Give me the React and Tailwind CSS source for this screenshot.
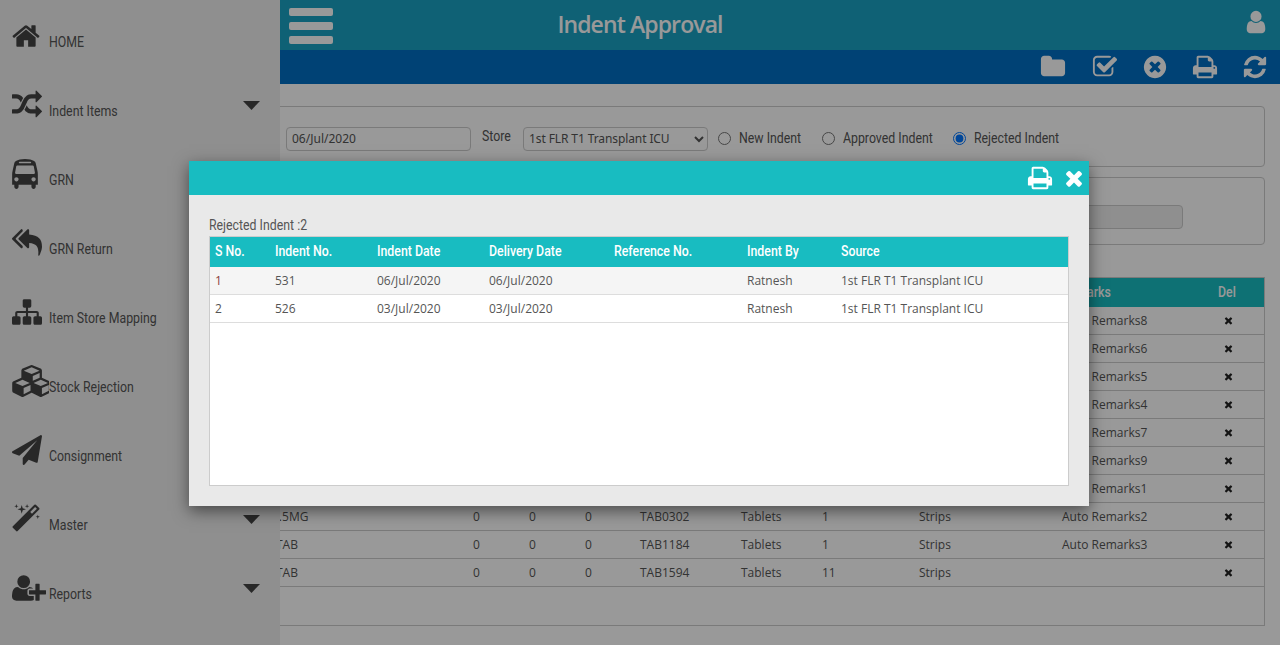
const P = {
  home: "M1472 992v480q0 26-19 45t-45 19h-384v-384h-256v384h-384q-26 0-45-19t-19-45v-480q0-1 .5-3t.5-3l575-474 575 474q1 2 1 6zm223-69l-62 74q-8 9-21 11h-3q-13 0-21-7l-692-577-692 577q-12 8-24 7-13-2-21-11l-62-74q-8-10-7-23.5t11-21.5l719-599q32-26 76-26t76 26l244 204v-195q0-14 9-23t23-9h192q14 0 23 9t9 23v408l219 182q10 8 11 21.5t-7 23.5z",
  random: "M666 481q-60 92-137 273-22-45-37-72.5t-40.5-63.5-51-56.5-63-35-81.5-14.5h-224q-14 0-23-9t-9-23v-192q0-14 9-23t23-9h224q250 0 410 225zm1126 799q0 14-9 23l-320 320q-9 9-23 9-13 0-22.5-9.5t-9.5-22.5v-192q-32 0-85 .5t-81 1-73-1-71-5-64-10.5-63-18.5-58-28.5-59-40-55-53.5-56-69.5q59-93 136-273 22 45 37 72.5t40.5 63.5 51 56.5 63 35 81.5 14.5h256v-192q0-14 9-23t23-9q12 0 24 10l319 319q9 9 9 23zm0-896q0 14-9 23l-320 320q-9 9-23 9-13 0-22.5-9.5t-9.5-22.5v-192h-256q-48 0-87 15t-69 45-51 61.5-45 77.5q-32 62-78 171-29 66-49.5 111t-54 105-64 100-74 83-90 68.5-106.5 42-128 16.5h-224q-14 0-23-9t-9-23v-192q0-14 9-23t23-9h224q48 0 87-15t69-45 51-61.5 45-77.5q32-62 78-171 29-66 49.5-111t54-105 64-100 74-83 90-68.5 106.5-42 128-16.5h256v-192q0-14 9-23t23-9q12 0 24 10l319 319q9 9 9 23z",
  bus: "M512 1216q0-53-37.5-90.5t-90.5-37.5-90.5 37.5-37.5 90.5 37.5 90.5 90.5 37.5 90.5-37.5 37.5-90.5zm1024 0q0-53-37.5-90.5t-90.5-37.5-90.5 37.5-37.5 90.5 37.5 90.5 90.5 37.5 90.5-37.5 37.5-90.5zm-46-396l-72-384q-5-23-22.5-37.5t-40.5-14.5h-918q-23 0-40.5 14.5t-22.5 37.5l-72 384q-5 30 14 53t49 23h1062q30 0 49-23t14-53zm-226-612q0-20-14-34t-34-14h-640q-20 0-34 14t-14 34 14 34 34 14h640q20 0 34-14t14-34zm400 725v603h-128v128q0 53-37.5 90.5t-90.5 37.5-90.5-37.5-37.5-90.5v-128h-768v128q0 53-37.5 90.5t-90.5 37.5-90.5-37.5-37.5-90.5v-128h-128v-603q0-112 25-223l103-454q9-78 97.5-137t230-89 312.5-30 312.5 30 230 89 97.5 137l105 454q23 102 23 223z",
  replyAll: "M640 1082v70q0 42-39 59-13 5-25 5-27 0-45-19l-512-512q-19-19-19-45t19-45l512-512q29-31 70-14 39 17 39 59v69l-397 398q-19 19-19 45t19 45zm1152 38q0 58-17 133.5t-38.5 138-48 125-40.5 90.5l-20 40q-8 17-28 17-6 0-9-1-25-8-23-34 43-400-106-565-64-71-170.5-110.5t-267.5-52.5v251q0 42-39 59-13 5-25 5-27 0-45-19l-512-512q-19-19-19-45t19-45l512-512q29-31 70-14 39 17 39 59v262q411 28 599 221 169 173 169 509z",
  sitemap: "M1792 1248v320q0 40-28 68t-68 28h-320q-40 0-68-28t-28-68v-320q0-40 28-68t68-28h96v-192h-512v192h96q40 0 68 28t28 68v320q0 40-28 68t-68 28h-320q-40 0-68-28t-28-68v-320q0-40 28-68t68-28h96v-192h-512v192h96q40 0 68 28t28 68v320q0 40-28 68t-68 28h-320q-40 0-68-28t-28-68v-320q0-40 28-68t68-28h96v-192q0-52 38-90t90-38h512v-192h-96q-40 0-68-28t-28-68v-320q0-40 28-68t68-28h320q40 0 68 28t28 68v320q0 40-28 68t-68 28h-96v192h512q52 0 90 38t38 90v192h96q40 0 68 28t28 68z",
  cubes: "M640 1632l384-192v-314l-384 164v342zm-64-454l404-173-404-173-404 173zm1088 454l384-192v-314l-384 164v342zm-64-454l404-173-404-173-404 173zm-448-293l384-165v-266l-384 164v267zm-64-379l441-189-441-189-441 189zm1088 518v416q0 36-19 67t-52 47l-448 224q-25 14-57 14t-57-14l-448-224q-4-2-7-4-2 2-7 4l-448 224q-25 14-57 14t-57-14l-448-224q-33-16-52-47t-19-67v-416q0-38 21.5-70t56.5-48l434-186v-400q0-38 21.5-70t56.5-48l448-192q23-10 50-10t50 10l448 192q35 16 56.5 48t21.5 70v400l434 186q36 16 57 48t21 70z",
  plane: "M1764 11q33 24 27 64l-256 1536q-5 29-32 45-14 8-31 8-11 0-24-5l-453-185-242 295q-18 23-49 23-13 0-22-4-19-7-30.5-23.5t-11.5-36.5v-349l864-1059-1069 925-395-162q-37-14-40-55-2-40 32-59l1664-960q15-9 32-9 20 0 36 11z",
  magic: "M1254 581l293-293-107-107-293 293zm447-293q0 27-18 45l-1286 1286q-18 18-45 18t-45-18l-198-198q-18-18-18-45t18-45l1286-1286q18-18 45-18t45 18l198 198q18 18 18 45zm-1351-190l98 30-98 30-30 98-30-98-98-30 98-30 30-98zm350 162l196 60-196 60-60 196-60-196-196-60 196-60 60-196zm930 478l98 30-98 30-30 98-30-98-98-30 98-30 30-98zm-640-640l98 30-98 30-30 98-30-98-98-30 98-30 30-98z",
  userPlus: "M704 896q-159 0-271.5-112.5t-112.5-271.5 112.5-271.5 271.5-112.5 271.5 112.5 112.5 271.5-112.5 271.5-271.5 112.5zm960 128h352q13 0 22.5 9.5t9.5 22.5v192q0 13-9.5 22.5t-22.5 9.5h-352v352q0 13-9.5 22.5t-22.5 9.5h-192q-13 0-22.5-9.5t-9.5-22.5v-352h-352q-13 0-22.5-9.5t-9.5-22.5v-192q0-13 9.5-22.5t22.5-9.5h352v-352q0-13 9.5-22.5t22.5-9.5h192q13 0 22.5 9.5t9.5 22.5v352zm-736 224q0 52 38 90t90 38h256v238q-68 50-171 50h-874q-121 0-194-69t-73-190q0-53 3.5-103.5t14-109 26.5-108.5 43-97.5 62-81 85.5-53.5 111.5-20q19 0 39 17 79 61 154.5 91.5t164.5 30.5 164.5-30.5 154.5-91.5q20-17 39-17 132 0 217 96h-223q-52 0-90 38t-38 90v192z",
  folder: "M1728 608v704q0 92-66 158t-158 66h-1216q-92 0-158-66t-66-158v-960q0-92 66-158t158-66h320q92 0 158 66t66 158v32h672q92 0 158 66t66 158z",
  check: "M1472 930v318q0 119-84.5 203.5t-203.5 84.5h-832q-119 0-203.5-84.5t-84.5-203.5v-832q0-119 84.5-203.5t203.5-84.5h832q63 0 117 25 15 7 18 23 3 17-9 29l-49 49q-10 10-23 10-3 0-9-2-23-6-45-6h-832q-66 0-113 47t-47 113v832q0 66 47 113t113 47h832q66 0 113-47t47-113v-254q0-13 9-22l64-64q10-10 23-10 6 0 12 3 20 8 20 29zm231-489l-814 814q-24 24-57 24t-57-24l-430-430q-24-24-24-57t24-57l110-110q24-24 57-24t57 24l263 263 647-647q24-24 57-24t57 24l110 110q24 24 24 57t-24 57z",
  timesCircle: "M1277 1122q0-26-19-45l-181-181 181-181q19-19 19-45 0-27-19-46l-90-90q-19-19-46-19-26 0-45 19l-181 181-181-181q-19-19-45-19-27 0-46 19l-90 90q-19 19-19 46 0 26 19 45l181 181-181 181q-19 19-19 45 0 27 19 46l90 90q19 19 46 19 26 0 45-19l181-181 181 181q19 19 45 19 27 0 46-19l90-90q19-19 19-46zm387-226q0 209-103 385.5t-279.5 279.5-385.5 103-385.5-103-279.5-279.5-103-385.5 103-385.5 279.5-279.5 385.5-103 385.5 103 279.5 279.5 103 385.5z",
  print: "M448 1536h896v-256h-896v256zm0-640h896v-384h-160q-40 0-68-28t-28-68v-160h-640v640zm1152 64q0-26-19-45t-45-19-45 19-19 45 19 45 45 19 45-19 19-45zm128 0v416q0 13-9.5 22.5t-22.5 9.5h-224v160q0 40-28 68t-68 28h-960q-40 0-68-28t-28-68v-160h-224q-13 0-22.5-9.5t-9.5-22.5v-416q0-79 56.5-135.5t135.5-56.5h64v-544q0-40 28-68t68-28h672q40 0 88 20t76 48l152 152q28 28 48 76t20 88v256h64q79 0 135.5 56.5t56.5 135.5z",
  refresh: "M1639 1056q0 5-1 7-64 268-268 434.5t-478 166.5q-146 0-282.5-55t-243.5-157l-129 129q-19 19-45 19t-45-19-19-45v-448q0-26 19-45t45-19h448q26 0 45 19t19 45-19 45l-137 137q71 66 161 102t187 36q134 0 250-65t186-179q11-17 53-117 8-23 30-23h192q13 0 22.5 9.5t9.5 22.5zm25-800v448q0 26-19 45t-45 19h-448q-26 0-45-19t-19-45 19-45l138-138q-148-137-349-137-134 0-250 65t-186 179q-11 17-53 117-8 23-30 23h-199q-13 0-22.5-9.5t-9.5-22.5v-7q65-268 270-434.5t480-166.5q146 0 284 55.5t245 156.5l130-129q19-19 45-19t45 19 19 45z",
  user: "M1536 1399q0 109-62.5 187t-150.5 78h-854q-88 0-150.5-78t-62.5-187q0-85 8.5-160.5t31.5-152 58.5-131 94-89 134.5-34.5q131 128 313 128t313-128q76 0 134.5 34.5t94 89 58.5 131 31.5 152 8.5 160.5zm-256-887q0 159-112.5 271.5t-271.5 112.5-271.5-112.5-112.5-271.5 112.5-271.5 271.5-112.5 271.5 112.5 112.5 271.5z",
  times: "M1490 1322q0 40-28 68l-136 136q-28 28-68 28t-68-28l-294-294-294 294q-28 28-68 28t-68-28l-136-136q-28-28-28-68t28-68l294-294-294-294q-28-28-28-68t28-68l136-136q28-28 68-28t68 28l294 294 294-294q28-28 68-28t68 28l136 136q28 28 28 68t-28 68l-294 294 294 294q28 28 28 68z",
};

const Icon = ({ name, box = 1792, className }) => (
  <svg viewBox={`0 0 ${box} 1792`} fill="currentColor" className={className}>
    <path d={P[name]} />
  </svg>
);

// Roboto squeezed to the width of the condensed face used for labels
const Cond = ({ children, className = "" }) => (
  <span className={`inline-block whitespace-nowrap origin-left scale-x-[0.88] font-[Roboto,sans-serif] text-[14px] ${className}`}>
    {children}
  </span>
);

const MENU = [
  { label: "HOME", icon: "home", size: "w-[30px] h-[30px] -ml-[1px]" },
  { label: "Indent Items", icon: "random", size: "w-[30px] h-[30px]", caret: true },
  { label: "GRN", icon: "bus", size: "w-[30px] h-[30px] -ml-[2px]" },
  { label: "GRN Return", icon: "replyAll", size: "w-[30px] h-[30px]" },
  { label: "Item Store Mapping", icon: "sitemap", size: "w-[30px] h-[30px]" },
  { label: "Stock Rejection", icon: "cubes", box: 2048, size: "w-[37px] h-[32px]" },
  { label: "Consignment", icon: "plane", size: "w-[30px] h-[30px]" },
  { label: "Master", icon: "magic", size: "w-[30px] h-[30px] -ml-[1px]", caret: true },
  { label: "Reports", icon: "userPlus", box: 2048, size: "w-[34px] h-[30px]", caret: true },
];

const ROWS = [
  { remarks: "Auto Remarks8" },
  { remarks: "Auto Remarks6" },
  { remarks: "Auto Remarks5" },
  { remarks: "Auto Remarks4" },
  { remarks: "Auto Remarks7" },
  { remarks: "Auto Remarks9" },
  { remarks: "Auto Remarks1" },
  { name: "0.5MG", nameClass: "ml-[-4px]", code: "TAB0302", unit: "Tablets", qty: "1", pack: "Strips", remarks: "Auto Remarks2" },
  { name: "TAB", nameClass: "ml-0", code: "TAB1184", unit: "Tablets", qty: "1", pack: "Strips", remarks: "Auto Remarks3" },
  { name: "TAB", nameClass: "ml-0", code: "TAB1594", unit: "Tablets", qty: "11", pack: "Strips", remarks: "" },
];

const INDENTS = [
  { sno: "1", no: "531", date: "06/Jul/2020", delivery: "06/Jul/2020", bg: "bg-[#f5f5f5]", snoClass: "text-[#8a4040]" },
  { sno: "2", no: "526", date: "03/Jul/2020", delivery: "03/Jul/2020", bg: "bg-white", snoClass: "" },
];

const Sidebar = () => (
  <aside className="w-[280px] flex-none h-[645px] bg-[#eeeeee] pt-[6px] overflow-hidden">
    {MENU.map((m) => (
      <div key={m.label} className="h-[69px] flex items-center pl-[12px] text-[#444]">
        <div className="w-[37px] flex-none h-[40px] -mt-[10px] flex items-center">
          <Icon name={m.icon} box={m.box} className={m.size} />
        </div>
        <Cond className="mt-[4px] text-[#555]">{m.label}</Cond>
        {m.caret && (
          <svg viewBox="0 0 17 9" className="w-[17px] h-[9px] ml-auto mr-[20px] -mt-[9px] text-[#444]" fill="currentColor">
            <path d="M0 0h17L8.5 9z" />
          </svg>
        )}
      </div>
    ))}
  </aside>
);

const Filters = () => (
  <div className="-ml-[20px] h-[61px] border border-[#ccc] rounded-[4px] flex items-center pl-[25px] pt-[4px] text-[#555]">
    <input
      readOnly
      value="06/Jul/2020"
      className="w-[185px] h-[24px] border border-[#ccc] rounded-[4px] px-[5px] text-[12px] text-[#555] bg-transparent"
    />
    <span className="ml-[11px] w-[41px] -mt-[5px] flex"><Cond>Store</Cond></span>
    <select className="w-[185px] h-[24px] border border-[#ccc] rounded-[4px] px-[1px] text-[12px] tracking-[-0.1px] text-[#555] bg-transparent">
      <option>1st FLR T1 Transplant ICU</option>
    </select>
    <label className="flex items-center ml-[10px]">
      <input type="radio" name="st" className="w-[13px] h-[13px] m-0 mr-[8px]" />
      <span className="w-[63px] flex"><Cond>New Indent</Cond></span>
    </label>
    <label className="flex items-center ml-[20px]">
      <input type="radio" name="st" className="w-[13px] h-[13px] m-0 mr-[8px]" />
      <span className="w-[90px] flex"><Cond>Approved Indent</Cond></span>
    </label>
    <label className="flex items-center ml-[20px]">
      <input type="radio" name="st" defaultChecked className="w-[13px] h-[13px] m-0 mr-[8px] accent-[#0075ff]" />
      <span className="w-[90px] flex"><Cond>Rejected Indent</Cond></span>
    </label>
  </div>
);

const ItemsTable = () => (
  <div className="mt-[32px] h-[349px] border border-l-0 border-[#ccc] -ml-[4px] overflow-hidden">
    <table className="w-full table-fixed border-separate border-spacing-0 font-['Open_Sans',sans-serif] text-[12px] text-[#555]">
      <colgroup>
        <col className="w-[191px]" />
        <col className="w-[56px]" />
        <col className="w-[56px]" />
        <col className="w-[55px]" />
        <col className="w-[101px]" />
        <col className="w-[81px]" />
        <col className="w-[97px]" />
        <col className="w-[143px]" />
        <col className="w-[137px]" />
        <col />
      </colgroup>
      <thead>
        <tr className="h-[29px] bg-[#18bcc1] text-white">
          <th colSpan={8}></th>
          <th className="text-left px-[6px]"><Cond className="font-medium">Remarks</Cond></th>
          <th className="font-medium text-center"><Cond className="font-medium">Del</Cond></th>
        </tr>
      </thead>
      <tbody>
        {ROWS.map((r) => (
          <tr key={r.remarks + r.code} className="h-[28px] [&>td]:border-b [&>td]:border-[#ccc]">
            <td className="whitespace-nowrap"><span className={`block ${r.nameClass}`}>{r.name}</span></td>
            <td className="px-[6px]">{r.name ? "0" : ""}</td>
            <td className="px-[6px]">{r.name ? "0" : ""}</td>
            <td className="px-[6px]">{r.name ? "0" : ""}</td>
            <td className="px-[6px]">{r.code}</td>
            <td className="px-[6px]">{r.unit}</td>
            <td className="px-[6px]">{r.qty}</td>
            <td className="px-[6px]">{r.pack}</td>
            <td className="px-[6px] whitespace-nowrap">{r.remarks}</td>
            <td>
              <Icon name="times" className="w-[11px] h-[11px] mx-auto text-[#222]" />
            </td>
          </tr>
        ))}
      </tbody>
    </table>
  </div>
);

const Modal = () => (
  <div className="absolute left-[189px] top-[161px] w-[900px] h-[345px] bg-[#e9e9e9] shadow-[0_5px_15px_rgba(0,0,0,0.5)]">
    <div className="h-[34px] bg-[#18bcc1] flex items-center justify-end text-white pr-[3px] gap-[9px]">
      <Icon name="print" className="w-[26px] h-[26px]" />
      <Icon name="times" className="w-[24px] h-[24px]" />
    </div>
    <div className="px-[20px] pt-[21px]">
      <div className="h-[20px] leading-[18px] text-[#555] flex"><Cond>Rejected Indent :2</Cond></div>
      <div className="h-[250px] border border-[#ccc] bg-white">
        <table className="w-full table-fixed border-separate border-spacing-0 font-['Open_Sans',sans-serif] text-[12px] text-[#555]">
          <colgroup>
            <col className="w-[60px]" />
            <col className="w-[102px]" />
            <col className="w-[112px]" />
            <col className="w-[125px]" />
            <col className="w-[133px]" />
            <col className="w-[94px]" />
            <col />
          </colgroup>
          <thead>
            <tr className="h-[30px] bg-[#18bcc1] text-white text-left">
              {["S No.", "Indent No.", "Indent Date", "Delivery Date", "Reference No.", "Indent By", "Source"].map((h) => (
                <th key={h} className="px-[5px] pb-[2px]"><Cond className="font-medium">{h}</Cond></th>
              ))}
            </tr>
          </thead>
          <tbody>
            {INDENTS.map((r) => (
              <tr key={r.sno} className={`h-[28px] [&>td]:border-b [&>td]:border-[#ddd] ${r.bg}`}>
                <td className={`px-[5px] ${r.snoClass}`}>{r.sno}</td>
                <td className="px-[5px]">{r.no}</td>
                <td className="px-[5px]">{r.date}</td>
                <td className="px-[5px]">{r.delivery}</td>
                <td className="px-[5px]"></td>
                <td className="px-[5px]">Ratnesh</td>
                <td className="px-[5px] whitespace-nowrap">1st FLR T1 Transplant ICU</td>
              </tr>
            ))}
          </tbody>
        </table>
      </div>
    </div>
  </div>
);

export default function App() {
  return (
    <div className="relative w-[1280px] h-[645px] overflow-hidden bg-white flex">
      <Sidebar />
      <main className="flex-1 min-w-0 overflow-hidden">
        <header className="h-[50px] bg-[#1aa2c3] relative flex items-center justify-center text-white">
          <div className="absolute left-[9px] top-[8px] w-[44px] flex flex-col gap-[6.5px]">
            <span className="block h-[7.5px] rounded-[2px] bg-white"></span>
            <span className="block h-[7.5px] rounded-[2px] bg-white"></span>
            <span className="block h-[7.5px] rounded-[2px] bg-white"></span>
          </div>
          <h1 className="font-['Open_Sans',sans-serif] font-semibold text-[23px] tracking-[-0.9px] -mt-[1px] mr-[280px]">Indent Approval</h1>
          <Icon name="user" className="absolute right-[11px] top-[9px] w-[26px] h-[26px]" />
        </header>
        <div className="h-[34px] bg-[#006ec3] flex items-center justify-end text-white pr-[12px] pb-[1px] gap-[24px]">
          <Icon name="folder" className="w-[26px] h-[26px] mr-[2px]" />
          <Icon name="check" className="w-[26px] h-[26px]" />
          <Icon name="timesCircle" className="w-[26px] h-[26px]" />
          <Icon name="print" className="w-[26px] h-[26px]" />
          <Icon name="refresh" className="w-[26px] h-[26px]" />
        </div>
        <div className="pt-[22px] pr-[15px]">
          <Filters />
          <div className="mt-[10px] -ml-[20px] h-[68px] border border-[#ccc] rounded-[4px] flex justify-end pt-[27px] pr-[81px]">
            <input readOnly className="w-[200px] h-[24px] border border-[#ccc] rounded-[4px] bg-[#eeeeee]" />
          </div>
          <ItemsTable />
        </div>
      </main>
      <div className="absolute inset-0 bg-black/40"></div>
      <Modal />
    </div>
  );
}
